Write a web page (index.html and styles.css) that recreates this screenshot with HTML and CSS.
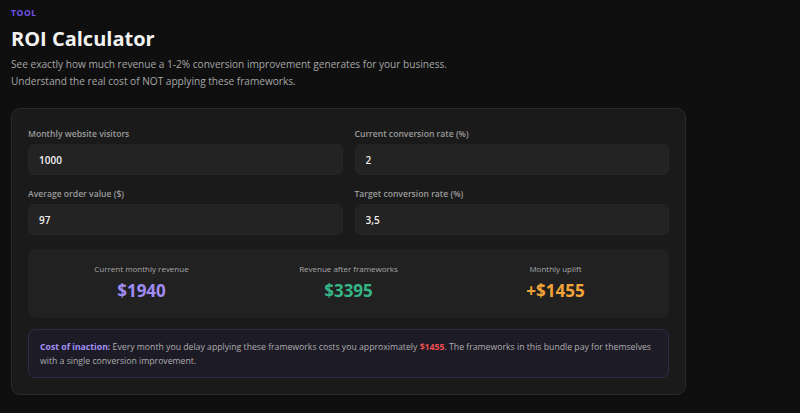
FILE: index.html
```html
<!DOCTYPE html>
<html lang="en">
<head>
<meta charset="UTF-8">
<meta name="viewport" content="width=device-width, initial-scale=1.0">
<title>ROI Calculator</title>
<link rel="stylesheet" href="styles.css">
</head>
<body>

<div class="page">
  <div class="header">
    <span class="eyebrow">TOOL</span>
    <h1>ROI Calculator</h1>
    <p>See exactly how much revenue a 1-2% conversion improvement generates for your business.<br>
    Understand the real cost of NOT applying these frameworks.</p>
  </div>

  <div class="calc-card">
    <div class="fields">
      <div class="field">
        <label for="visitors">Monthly website visitors</label>
        <input id="visitors" type="text" value="1000">
      </div>
      <div class="field">
        <label for="currentRate">Current conversion rate (%)</label>
        <input id="currentRate" type="text" value="2">
      </div>
      <div class="field">
        <label for="orderValue">Average order value ($)</label>
        <input id="orderValue" type="text" value="97">
      </div>
      <div class="field">
        <label for="targetRate">Target conversion rate (%)</label>
        <input id="targetRate" type="text" value="3,5">
      </div>
    </div>

    <div class="results">
      <div class="result">
        <div class="result-label">Current monthly revenue</div>
        <div class="result-value purple">$1940</div>
      </div>
      <div class="result">
        <div class="result-label">Revenue after frameworks</div>
        <div class="result-value green">$3395</div>
      </div>
      <div class="result">
        <div class="result-label">Monthly uplift</div>
        <div class="result-value orange">+$1455</div>
      </div>
    </div>

    <div class="inaction">
      <strong class="inaction-title">Cost of inaction:</strong> Every month you delay applying these frameworks costs you approximately <strong class="loss">$1455</strong>. The frameworks in this bundle pay for themselves<br>
      with a single conversion improvement.
    </div>
  </div>
</div>

</body>
</html>
```

FILE: styles.css
```css
* {
  margin: 0;
  padding: 0;
  box-sizing: border-box;
  font-family: 'Open Sans', 'Noto Sans', sans-serif;
}

body {
  background: #0f0f0f;
  color: #fff;
  min-height: 100vh;
}

.page {
  padding: 7px 11px 20px;
  width: 697px;
}

.eyebrow {
  display: block;
  font-size: 8.5px;
  font-weight: 700;
  letter-spacing: 0.6px;
  color: #6f52e6;
  line-height: 11px;
}

.header h1 {
  font-size: 20px;
  font-weight: 700;
  line-height: 28px;
  margin-top: 7px;
  color: #f2f2f2;
}

.header p {
  font-size: 10.1px;
  line-height: 17px;
  color: #a6a6a6;
  margin-top: 3px;
}

.calc-card {
  margin-top: 18px;
  background: #1a1a1a;
  border: 1px solid #2a2a2a;
  border-radius: 9px;
  padding: 16px 16px 16px;
}

.fields {
  display: grid;
  grid-template-columns: 1fr 1fr;
  column-gap: 12px;
  row-gap: 10px;
}

.field label {
  display: block;
  font-size: 8.6px;
  font-weight: 600;
  color: #9c9c9c;
  line-height: 12px;
  margin-top: 3px;
  margin-bottom: 4px;
}

.field input {
  width: 100%;
  height: 31px;
  background: #232323;
  border: 1px solid #262626;
  border-radius: 6px;
  color: #f0f0f0;
  font-size: 10px;
  font-weight: 600;
  padding: 0 10px;
  outline: none;
}

.results {
  margin-top: 14px;
  background: #212121;
  border-radius: 7px;
  display: grid;
  grid-template-columns: repeat(3, 1fr);
  gap: 16px;
  padding: 14px 18px 15px;
  text-align: center;
}

.result-label {
  font-size: 8px;
  color: #a8a8a8;
  line-height: 12px;
}

.result-value {
  font-size: 17px;
  font-weight: 700;
  line-height: 24px;
  margin-top: 4px;
}

.purple { color: #a08cf5; }
.green { color: #35b586; }
.orange { color: #f2a33a; }

.inaction {
  margin-top: 11px;
  background: #1d1b26;
  border: 1px solid #2f2a48;
  border-radius: 7px;
  padding: 10px 11px 9px;
  font-size: 8.7px;
  line-height: 14px;
  color: #adadad;
}

.inaction-title {
  color: #a390f8;
}

.loss {
  color: #ef4f52;
}
```
